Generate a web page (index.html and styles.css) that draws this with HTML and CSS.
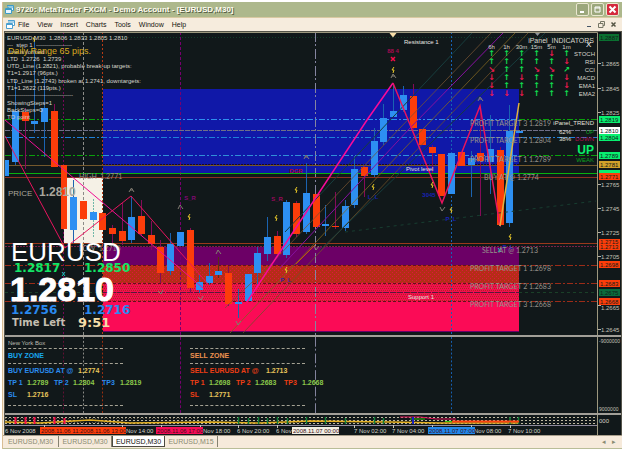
FILE: index.html
```html
<!DOCTYPE html>
<html lang="en">
<head>
<meta charset="utf-8">
<title>9720: MetaTrader FXCM</title>
<link rel="stylesheet" href="styles.css">
</head>
<body>
<div class="window">
  <header class="titlebar">
    <svg class="app-icon" viewBox="0 0 9 9"><path d="M2 .5h6.500v5H7M2 2h6.500" fill="#e9f6ff" stroke="#3c9cc8"/><path d="M.5 3.500h6v5h-6z" fill="#e9f6ff" stroke="#3c9cc8"/><path d="M.5 4.500h6" stroke="#3c9cc8"/></svg>
    <h1>9720: MetaTrader FXCM - Demo Account - [EURUSD,M30]</h1>
    <button class="win" aria-label="Minimize"><svg viewBox="0 0 11 11"><path d="M3 8h4" stroke="#fff" stroke-width="2"/></svg></button>
    <button class="win" aria-label="Restore"><svg viewBox="0 0 11 11"><path d="M3 3h5v5H3zM3 4h5" fill="none" stroke="#fff"/></svg></button>
    <button class="win close" aria-label="Close"><svg viewBox="0 0 11 11"><path d="M2.500 2.500l6 6M8.500 2.500l-6 6" stroke="#fff" stroke-width="2"/></svg></button>
  </header>
  <nav class="menubar">
    <svg class="app-icon" viewBox="0 0 9 9"><path d="M2 .5h6.500v5H7M2 2h6.500" fill="#fff" stroke="#4aa0d0"/><path d="M.5 3.500h6v5h-6z" fill="#fff" stroke="#4aa0d0"/><path d="M.5 4.500h6" stroke="#4aa0d0"/></svg>
    <button>File</button><button>View</button><button>Insert</button><button>Charts</button><button>Tools</button><button>Window</button><button>Help</button>
    <span class="spacer"></span>
    <button class="mdi" aria-label="Minimize chart"><svg viewBox="0 0 7 7"><path d="M1 5.500h4" stroke="#456"/></svg></button>
    <button class="mdi" aria-label="Restore chart"><svg viewBox="0 0 7 7"><path d="M2.500 2V.5h4v4H5M.5 2.500H5v4H.5z" fill="none" stroke="#776"/></svg></button>
    <button class="mdi" aria-label="Close chart"><svg viewBox="0 0 7 7"><path d="M1.500 1.500l4 4M5.500 1.500l-4 4" stroke="#554" stroke-width="1.500"/></svg></button>
  </nav>
  <main class="workspace">
    <svg class="chart" viewBox="5 32 616 303">
      <defs>
        <pattern id="mixBrown" width="4" height="4" patternUnits="userSpaceOnUse"><rect width="4" height="4" fill="#b52d17"/><path d="M0 0h1v1H0zM2 2h1v1H2z" fill="#e01440"/></pattern>
        <pattern id="mixRed" width="4" height="4" patternUnits="userSpaceOnUse"><rect width="4" height="4" fill="#f40d50"/><path d="M0 0h1v1H0zM2 0h1v1H2zM1 2h1v1H1zM3 2h1v1H3z" fill="#b3281d"/></pattern>
      </defs>
      <!-- zones -->
      <rect x="103" y="89" width="416" height="84" fill="#1018a8"/>
      <rect x="103" y="247" width="416" height="18" fill="#6c0066"/>
      <rect x="103" y="265" width="416" height="18" fill="url(#mixBrown)"/>
      <rect x="103" y="283" width="416" height="19" fill="url(#mixRed)"/>
      <rect x="103" y="302" width="416" height="29" fill="#fb0b56"/>
      <path d="M103 331.500H519" stroke="#6c0066"/>
      <rect x="64" y="177" width="39" height="66" fill="#f5f1e6"/>
      <!-- time markers -->
      <g fill="none">
        <path d="M63.500 32V335" stroke="#760858" stroke-dasharray="2 2"/>
        <path d="M83.500 32V335" stroke="#8c8c88" stroke-dasharray="3 2"/>
        <path d="M102.500 32V335" stroke="#b83a14" stroke-dasharray="2 2"/>
        <path d="M180.500 32V335" stroke="#780070" stroke-dasharray="3 2"/>
        <path d="M315.500 32V335" stroke="#8585a0" stroke-dasharray="10 2 2 3"/>
        <path d="M451.500 32V335" stroke="#1662b4" stroke-dasharray="2 2"/>
      </g>
      <!-- price levels -->
      <g fill="none">
        <path d="M5 37.500H597" stroke="#123b2a" stroke-dasharray="1 2"/>
        <path d="M5 119.500H103M519 119.500H597" stroke="#0aa00c" stroke-dasharray="6 2 2 2"/>
        <path d="M103 119.500H519" stroke="#2e90f0" stroke-dasharray="6 2 2 2"/>
        <path d="M5 130.500H597" stroke="#707088" stroke-dasharray="5 1"/>
        <path d="M5 137.500H597" stroke="#2080d8" stroke-dasharray="6 2 2 2"/>
        <path d="M5 155.500H103M519 155.500H597" stroke="#0aa00c" stroke-dasharray="6 2 2 2"/>
        <path d="M103 155.500H519" stroke="#3090d8" stroke-dasharray="6 2 2 2"/>
        <path d="M103 164.500H519" stroke="#200820" stroke-dasharray="2 1"/>
        <path d="M5 165.500H597" stroke="#75592c"/>
        <path d="M5 173.500H597" stroke="#08b010"/>
        <path d="M5 177.500H597" stroke="#8c3020"/>
        <path d="M5 243.500H597" stroke="#9a381c"/>
        <path d="M5 246.500H597" stroke="#7a2244" stroke-dasharray="2 1"/>
        <path d="M5 265.500H103M519 265.500H597M5 283.500H103M519 283.500H597M5 301.500H103M519 301.500H597" stroke="#9c2c18" stroke-dasharray="6 2 2 2"/>
        <path d="M103 265.500H519M103 283.500H519M103 301.500H519" stroke="#61131c" stroke-dasharray="3 2"/>
        <path d="M103 292.500H519" stroke="#5a1838" stroke-dasharray="6 1"/>
        <path d="M5 292.500H103M519 292.500H597" stroke="#1a4028" stroke-dasharray="3 3"/>
      </g>
      <!-- wicks -->
      <path d="M15.500 80V165M34.500 38V133M44.500 76V157M73.500 180V243M131.500 196V243M170.500 233V275M199.500 275V293M209.500 263V285M238.500 289V318M257.500 247V284M267.500 217V261M306.500 163V234M325.500 205V236M345.500 200V231M354.500 156V208M374.500 128V177M383.500 104V145M393.500 83V117M403.500 86V112M471.500 151V197M490.500 115V194M509.500 105V227M286.500 200V258" stroke="#1b63b0" fill="none"/>
      <path d="M93.500 199V238" stroke="#70b8a8" stroke-dasharray="2 1"/>
      <path d="M25.500 108V169M54.500 104V167M112.500 225V243M122.500 203V245M141.500 200V236M151.500 221V250M160.500 240V283M190.500 228V293M228.500 266V306M277.500 231V258M296.500 201V237M335.500 192V229M364.500 165V197M413.500 84V130M432.500 145V173M480.500 106V216M500.500 147V227" stroke="#850b58" fill="none"/>
      <path d="M218.500 257V278" stroke="#563018"/>
      <!-- rising bodies -->
      <path d="M5 160h4v16H5zM12 111h7v51h-7zM31 121h7v3h-7zM41 108h7v14h-7zM70 197h7v33h-7zM90 212h7v8h-7zM128 217h7v23h-7zM167 244h7v27h-7zM177 232h7v14h-7zM196 282h7v8h-7zM206 276h7v7h-7zM215 271h7v4h-7zM235 302h7v2h-7zM245 274h7v27h-7zM254 253h7v20h-7zM264 237h7v17h-7zM283 202h7v53h-7zM303 193h7v39h-7zM322 224h7v2h-7zM342 206h7v22h-7zM351 169h7v36h-7zM371 141h7v34h-7zM380 118h7v24h-7zM390 111h7v6h-7zM400 95h7v15h-7zM448 153h7v41h-7zM468 158h7v7h-7zM487 149h7v13h-7zM506 131h7v92h-7zM516 131h7v2h-7z" fill="#2d8ff2"/>
      <!-- falling bodies -->
      <path d="M22 112h7v9h-7zM51 111h7v56h-7zM61 165h6v64h-6zM80 201h7v18h-7zM99 213h7v17h-7zM109 228h7v6h-7zM119 231h7v10h-7zM138 216h7v18h-7zM148 235h7v9h-7zM157 247h7v26h-7zM187 230h7v58h-7zM225 273h7v31h-7zM274 236h7v18h-7zM293 203h7v31h-7zM313 194h7v33h-7zM332 226h7v1h-7zM361 167h7v9h-7zM410 96h7v32h-7zM419 129h7v16h-7zM429 147h7v6h-7zM438 154h7v42h-7zM458 152h7v14h-7zM477 153h7v8h-7zM497 150h7v75h-7z" fill="#fc3d0a"/>
      <!-- channels -->
      <g fill="none" stroke-width="1">
        <path d="M491 33L400 128L270 265L225 308" stroke="#765332" opacity=".75"/>
        <path d="M503 33L410 128L280 268" stroke="#8610a0"/>
        <path d="M515 33L403 150L230 333" stroke="#806420" opacity=".8"/>
        <path d="M528 33L412 155L243 333" stroke="#705228" opacity=".75"/>
        <path d="M472 33L285 232M545 33L320 250" stroke="#173d3d"/>
        <path d="M345 232L596 201" stroke="#173d30" stroke-dasharray="3 4"/>
        <path d="M296 264L315 245" stroke="#c05010"/>
      </g>
      <!-- zigzags -->
      <g fill="none" stroke="#e8145e">
        <path d="M5 120L102 202L203 288" stroke="#f00e94"/>
        <path d="M5 136L65 248L131 196L208 284"/>
        <path d="M247 302L367 120L393 83" stroke="#f80b9a" stroke-width="1.500"/>
        <path d="M393 83L442 203L480 106L500 226" stroke-width="1.500"/>
        <path d="M500 226L519 103" stroke="#e2b23e" stroke-width="1.500"/>
      </g>
      <!-- fractal marks -->
      <g fill="none" stroke="#827d72">
        <path d="M129 192l2.500-4 2.500 4M178 209l2-4 3 4M304 159l2-4 3 4M478 101l2-4 3 4M391 78l2-4 3 4M216 254l2-4 3 4M440 207l2 4 3-4M236 321l2 4 3-4M158 291l3 3 2-4M198 297l3 3 2-4M314 246l2 4 3-4"/>
        <path d="M130 190h3M305 157h3M392 76h3M479 99h3"/>
      </g>
      <path d="M389.500 33h7L393 37.500z" fill="#f6dda8"/><path d="M535 33h5l-2.500 3z" fill="#8d939a"/>
      <path d="M391 57l4 4M395 57l-4 4" stroke="#f50b48" stroke-width="1.500"/>
      <path d="M190 214l-2 3h2l-1 3M297 187l-2 3h2l-1 3M277 215l-2 3h2l-1 3M287 267l-2 3h2l-1 3M374 184l-2 3h2l-1 3M433 182l-2 3h2l-1 3M452 207l-2 3h2l-1 3M511 234l-2 3h2l-1 3M394 67l-2 3h2l-1 3M35 36l-2 3h2l-1 3" stroke="#e8c828" fill="none"/>
      <path d="M62 272l3 4M65 272l-3 4M498 248l3 4M501 248l-3 4" stroke="#14c7c0"/>
      <g class="t signal" text-anchor="middle">
        <text x="393" y="53" fill="#a40b50">88 4</text><text x="190" y="200" fill="#820875">S_R</text><text x="277" y="201" fill="#9a085a">S_R</text>
        <text x="296" y="173" fill="#b00828">DGR</text><text x="286" y="282" fill="#3420a0">P_L</text><text x="373" y="199" fill="#1822a8">L_L</text>
        <text x="429" y="197" fill="#1822b8">3045</text><text x="451" y="221" fill="#1822b8">P_L</text><text x="508" y="249" fill="#1822b8">P_L</text>
      </g>
      <!-- info text -->
      <g class="t" fill="#d8d6cc">
        <text x="7" y="40">EURUSD,M30&#160; 1.2806 1.2833 1.2805 1.2810</text>
        <text x="7" y="47">---&#160; step 1 &#160;------------------</text>
        <text x="7" y="54">Line is formed</text>
        <text x="7" y="61">LTD&#160; 1.2726&#160; 1.2739</text>
        <text x="7" y="68">UTD_Line (1.2821), probable break-up targets:</text>
        <text x="7" y="75">T1=1.2917 (96pts.)</text>
        <text x="7" y="83">LTD_Line (1.2743) broken at 1.2741, downtargets:</text>
        <text x="7" y="90">T1=1.2622 (119pts.)</text>
        <text x="7" y="97">---------------------------------</text>
        <text x="7" y="105">ShowingSteps=1</text>
        <text x="7" y="112">BackSteps=0</text>
        <text x="7" y="119">TO point</text>
      </g>
      <text class="range" x="8" y="54">Daily Range 65 pips.</text>
      <g class="t" fill="#e8e6e0">
        <text x="404" y="44">Resistance 1</text><text x="406" y="171">Pivot level</text><text x="408" y="299">Support 1</text>
      </g>
      <g class="level">
        <text x="470" y="126">PROFIT TARGET 3 1.2819</text><text x="470" y="143">PROFIT TARGET 2 1.2804</text>
        <text x="470" y="162">PROFIT TARGET 1 1.2789</text><text x="484" y="180">BUY AT @ 1.2774</text>
        <text x="482" y="253">SELL AT @ 1.2713</text><text x="470" y="271">PROFIT TARGET 1 1.2698</text>
        <text x="470" y="289">PROFIT TARGET 2 1.2683</text><text x="470" y="307">PROFIT TARGET 3 1.2668</text>
        <text x="79" y="179">HIGH&#160; 1.2771</text><text x="79" y="251">LOW&#160; 1.2716</text>
      </g>
      <g fill="#aaa69c"><text class="price-label" x="8" y="196">PRICE</text><text class="price-value" x="39" y="196">1.2810</text></g>
      <text class="symbol" x="11" y="261">EURUSD</text>
      <text class="big" x="10" y="301">1.2810</text>
      <g class="wide">
        <text x="14" y="272" fill="#13e667">1.2817</text><text x="84" y="272" fill="#13e667">1.2850</text>
        <text x="11" y="314" fill="#2989ef">1.2756</text><text x="84" y="314" fill="#2989ef">1.2716</text>
      </g>
      <text class="left-label" x="12" y="326">Time Left</text><text class="left-time" x="78" y="327">9:51</text>
      <!-- indicator panel -->
      <foreignObject x="484" y="37" width="112" height="62">
        <table class="indicators">
          <caption>iPanel_INDICATORS</caption>
          <thead><tr><th>6h</th><th>1h</th><th>30m</th><th>15m</th><th>5m</th><th>1m</th><th></th></tr></thead>
          <tbody>
            <tr><td>↑</td><td>↑</td><td>↑</td><td>↑</td><td class="dn">↓</td><td>↑</td><th>STOCH</th></tr>
            <tr><td>↑</td><td>↑</td><td>↑</td><td>↑</td><td>↑</td><td class="dn">↓</td><th>RSI</th></tr>
            <tr><td class="dn">↘</td><td>↑</td><td>↑</td><td class="dn">↘</td><td class="dn">↘</td><td>↗</td><th>CCI</th></tr>
            <tr><td class="dn">↓</td><td>↑</td><td class="dn">↓</td><td>↑</td><td>↑</td><td class="dn">↓</td><th>MACD</th></tr>
            <tr><td class="dn">↓</td><td>↑</td><td>↑</td><td>↑</td><td>↑</td><td class="dn">↓</td><th>EMA1</th></tr>
            <tr><td class="dn">↓</td><td class="dn">↓</td><td class="dn">↓</td><td>↑</td><td>↑</td><td>↑</td><th>EMA2</th></tr>
          </tbody>
        </table>
      </foreignObject>
      <text class="cursor" x="586" y="47">X</text>
      <g class="trend" text-anchor="end">
        <text x="594" y="125" fill="#e4e2dc">iPanel_TREND</text><text x="571" y="134" fill="#e4e2dc">62%</text><text x="571" y="141" fill="#e4e2dc">38%</text>
        <text x="594" y="134" fill="#0ca020">UP</text><text x="594" y="141" fill="#b50a48">DOWN</text><text x="594" y="162" fill="#0ca020">WEAK</text>
      </g>
      <text class="up" x="594" y="154" text-anchor="end">UP</text>
      <!-- price axis -->
      <rect x="597" y="32" width="24" height="303" fill="#11181a"/>
      <path d="M5 32.500H597.500V335" stroke="#9d987f" fill="none"/>
      <path d="M598 63.500h3M598 88.500h3M598 112.500h3M598 184.500h3M598 208.500h3M598 232.500h3M598 256.500h3M598 305.500h3M598 329.500h3" stroke="#b5b2a8"/>
      <g class="t" fill="#c4c2b8">
        <text x="601" y="66">1.2865</text><text x="601" y="91">1.2845</text><text x="601" y="115">1.2825</text><text x="601" y="187">1.2765</text><text x="601" y="211">1.2745</text><text x="601" y="235">1.2725</text><text x="601" y="259">1.2705</text><text x="601" y="310">1.2665</text><text x="601" y="332">1.2645</text>
      </g>
      <path d="M599 34h20v7h-20z" fill="#0a7030"/>
      <path d="M599 116h21v7h-21zM599 134h21v7h-21zM599 152h21v7h-21zM599 170h21v7h-21z" fill="#08f070"/>
      <path d="M599 127h21v7h-21z" fill="#fff"/><path d="M599 161h21v7h-21z" fill="#d2a02a"/>
      <path d="M599 173h21v7h-21zM599 239h21v11h-21zM599 261h21v7h-21zM599 280h21v7h-21zM599 298h21v7h-21z" fill="#fc3d0a"/>
      <path d="M599 289h21v7h-21z" fill="#0a6b3c"/>
      <g class="t" fill="#10201a">
        <text x="600" y="40">1.2887</text><text x="600" y="122">1.2819</text><text x="600" y="133">1.2810</text><text x="600" y="140">1.2804</text><text x="600" y="158">1.2789</text><text x="600" y="167">1.2781</text><text x="600" y="179">1.2771</text><text x="600" y="244">1.2715</text><text x="600" y="249">1.2713</text><text x="600" y="267">1.2698</text><text x="600" y="286">1.2683</text><text x="600" y="295">1.2675</text><text x="600" y="304">1.2668</text>
      </g>
    </svg>
    <section class="orders">
      <div class="box">
        <svg class="guides" viewBox="5 337 592 78" preserveAspectRatio="none" fill="none">
          <path d="M63.500 337V415" stroke="#641035" stroke-dasharray="2 2"/><path d="M83.500 337V415" stroke="#8c8c88" stroke-dasharray="2 2"/><path d="M102.500 337V415" stroke="#9c3010" stroke-dasharray="2 2"/><path d="M180.500 337V415" stroke="#780070" stroke-dasharray="3 2"/><path d="M315.500 337V415" stroke="#8585a0" stroke-dasharray="10 2 2 3"/><path d="M451.500 337V415" stroke="#1662b4" stroke-dasharray="2 2"/>
        </svg>
        <div class="box-title">New York Box</div>
        <div class="zones">
          <div class="zone buy">
            <hr><div class="head">BUY ZONE</div><hr>
            <div class="at"><span>BUY EURUSD AT @</span><b class="y">1.2774</b></div>
            <div class="tps"><span>TP 1</span><b>1.2789</b><span>TP 2</span><b>1.2804</b><span>TP3</span><b>1.2819</b></div>
            <div class="tps"><span>SL</span><b class="y">1.2716</b></div><hr class="end">
          </div>
          <div class="zone sell">
            <hr><div class="head">SELL ZONE</div><hr>
            <div class="at"><span>SELL EURUSD AT @</span><b class="y">1.2713</b></div>
            <div class="tps"><span>TP 1</span><b>1.2698</b><span>TP 2</span><b>1.2683</b><span>TP3</span><b>1.2668</b></div>
            <div class="tps"><span>SL</span><b class="y">1.2771</b></div><hr class="end">
          </div>
        </div>
      </div>
      <div class="scale"><span>-9000000</span><span>9000000</span></div>
    </section>
    <svg class="timeline" viewBox="5 415 616 20">
      <path d="M5 417.500H597M5 420.500H597M5 423.500H597" stroke="#beb8a0" stroke-dasharray="2 2"/>
      <path d="M5 418.500H200M5 422.500H300" stroke="#655a48" stroke-dasharray="1 2"/>
      <path d="M5 422L40 423L90 420L130 423L210 422L260 423L310 421L390 422L440 423H519" stroke="#e3af22" fill="none" stroke-width="1.500"/>
      <path d="M15.500 417v7M25.500 417v7M34.500 417v7M54.500 417v7M64.500 418v6" stroke="#f51048" stroke-width="2"/>
      <path d="M238.500 417v7M248.500 418v6M258.500 417v7M267.500 418v6M277.500 417v7M287.500 418v6M306.500 417v7M325.500 417v7M345.500 418v6M374.500 417v7M383.500 418v6M510 417v7M518.500 417v7" stroke="#128038" stroke-width="1.500"/>
      <path d="M400 417h20l16 2h20" stroke="#e01458" fill="none"/><path d="M410 419h15M445 421.500h10" stroke="#30c010"/><path d="M452 421.500h67" stroke="#fa4210" stroke-width="2"/><path d="M413 417v7" stroke="#1820c0" stroke-width="2"/>
      <path d="M5 425.500H597" stroke="#8e8a9c"/><path d="M597.500 415V435" stroke="#9d987f"/>
      <path d="M44.500 425v3M122.500 425v3M161.500 425v3M200.500 425v3M238.500 425v3M277.500 425v3M354.500 425v3M393.500 425v3M432.500 425v3M471.500 425v3M510.500 425v3" stroke="#c8c5b8"/>
      <g class="t" fill="#d4d2c8">
        <text x="5" y="433">6 Nov 2008</text><text x="121" y="433">6 Nov 14:00</text><text x="198" y="433">6 Nov 18:00</text><text x="237" y="433">6 Nov 20:00</text><text x="276" y="433">6 Nov 22:00</text><text x="354" y="433">7 Nov 02:00</text><text x="392" y="433">7 Nov 04:00</text><text x="469" y="433">7 Nov 08:00</text><text x="508" y="433">7 Nov 10:00</text><text x="599" y="423">000</text>
      </g>
      <rect x="40" y="427" width="86" height="7" fill="#fc3d0a"/><rect x="156" y="427" width="47" height="7" fill="#f50b56"/><rect x="292" y="427" width="47" height="7" fill="#f1eee3"/><rect x="428" y="427" width="47" height="7" fill="#2088ec"/>
      <g class="t" fill="#401018"><text x="41" y="433">2008.11.06 11:</text><text x="80" y="433">2008.11.06 13:00</text><text x="157" y="433">2008.11.06 17:00</text><text x="293" y="433">2008.11.07 00:00</text><text x="429" y="433">2008.11.07 07:00</text></g>
    </svg>
  </main>
  <footer class="tabs">
    <button>EURUSD,M30</button><button>EURUSD,M30</button><button class="active">EURUSD,M30</button><button>EURUSD,M15</button>
    <span class="spacer"></span><button class="arrow" aria-label="Scroll left">◂</button><button class="arrow" aria-label="Scroll right">▸</button>
  </footer>
</div>
</body>
</html>
```
FILE: styles.css
```css
* { box-sizing: border-box; }
body { margin: 0; padding: 2px 3px 1px 2px; background: #fff; font-family: "Liberation Sans", Arial, sans-serif; }
button { border: 0; padding: 0; margin: 0; background: none; font: inherit; color: inherit; }
svg { display: block; }
.window { background: #f5e8d6; border-left: 1px solid #d9bd94; }
.titlebar { display: flex; align-items: center; height: 16px; gap: 2px; padding: 0 3px 0 2px; background: #adb88c; border-bottom: 1px solid #d9c9a2; }
.app-icon { width: 9px; height: 9px; flex: none; }
h1 { flex: 1; margin: 0; font-size: 8px; line-height: 14px; font-weight: bold; color: #fffdf0; text-shadow: 1px 1px 0 #566046; white-space: nowrap; }
.win { width: 13px; height: 13px; border: 1px solid #eae7d0; border-radius: 2px; background: #9ba77c; }
.win svg { width: 11px; height: 11px; }
.close { background: #d4293c; }
.menubar { display: flex; align-items: center; height: 13px; gap: 8px; padding: 0 5px 0 3px; font-size: 7px; line-height: 11px; color: #15150f; background: #f6ecdd; }
.menubar .app-icon { margin-right: -5px; }
.spacer { flex: 1; }
.mdi { width: 7px; margin-left: -4px; }
.mdi svg { width: 7px; height: 7px; }
.mdi + .mdi { margin-left: -3px; }
.workspace { margin-left: 1px; background: #11181a; border: 1px solid #55544a; border-width: 1px 1px 0; }
.chart, .timeline { width: 100%; height: auto; }
.t { font-size: 6px; }
.signal { font-weight: bold; }
.level { font-family: Lato, sans-serif; font-size: 7px; fill: #96928a; }
.range { font-size: 9px; fill: #d9ab20; }
.price-label { font-size: 8px; }
.price-value { font-size: 12px; font-weight: bold; }
.symbol { font-size: 26px; fill: #fff; }
.big { font-size: 34px; font-weight: bold; fill: #fff; stroke: #fff; stroke-width: 1px; }
.wide, .left-label, .left-time { font-family: "DejaVu Sans", sans-serif; font-weight: bold; }
.wide { font-size: 12px; }
.left-label { font-size: 10px; fill: #c4beb0; }
.left-time { font-size: 13px; fill: #f4dda8; }
.cursor { font-size: 8px; fill: #fff; }
.trend { font-size: 6px; }
.up { font-size: 12px; font-weight: bold; fill: #08ef6c; }
.indicators { width: 100%; table-layout: fixed; border-collapse: collapse; font-size: 6px; line-height: 8px; color: #d8d6cc; }
.indicators caption { text-align: right; font-size: 7px; line-height: 7px; padding-right: 2px; }
.indicators th, .indicators td { padding: 0; width: 15px; height: 8px; font-weight: normal; text-align: center; white-space: nowrap; }
.indicators thead th { height: 6px; line-height: 6px; }
.indicators tbody th, .indicators thead th:last-child { width: 22px; text-align: right; padding-right: 1px; }
.indicators td { color: #10e050; font: bold 8px/8px "DejaVu Sans", sans-serif; }
.indicators .dn { color: #f01850; }
.orders { display: flex; border: 2px solid #a29f98; border-width: 2px 0; }
.box { position: relative; flex: 1; padding: 2px 3px 6px; border-right: 1px solid #9d987f; }
.guides { position: absolute; inset: 0; width: 100%; height: 100%; }
.box-title { font-size: 6px; line-height: 8px; color: #bdbbb2; }
.zones { display: grid; grid-template-columns: 182px 1fr; position: relative; }
.zone { font-size: 7px; line-height: 12px; font-weight: bold; white-space: nowrap; }
.zone hr { width: 115px; margin: 1px 0; border: 0; border-top: 1px dashed #a5a294; }
.zone .end { margin-top: 4px; }
.at, .tps { display: grid; }
.at { grid-template-columns: 70px 40px; }
.sell .at { grid-template-columns: 76px 40px; }
.tps { grid-template-columns: 19px 27px 19px 29px 18px 27px; }
.buy { color: #2a8cf0; }
.buy .head { color: #18a8f0; }
.sell { color: #ef3e14; }
.sell .head { color: #ef9250; }
.zone b { color: #8cc84a; }
.zone .y { color: #e5c45a; }
.scale { width: 23px; display: flex; flex-direction: column; justify-content: space-between; font-size: 5px; line-height: 8px; color: #c4c2b8; padding-left: 1px; }
.tabs { display: flex; height: 14px; align-items: flex-start; padding-right: 3px; border-top: 1px solid #a99f8c; border-bottom: 1px solid #b9bd98; background: #f6eadb; font-size: 7px; line-height: 11px; color: #8a8b72; }
.tabs button { width: 53px; height: 11px; border-right: 1px solid #858270; }
.tabs button:first-child { width: 56px; }
.tabs .active { background: #fff; color: #15150f; border: 1px solid #4c4a40; border-top: 0; }
.tabs .arrow { width: 10px; border: 0; }
```
